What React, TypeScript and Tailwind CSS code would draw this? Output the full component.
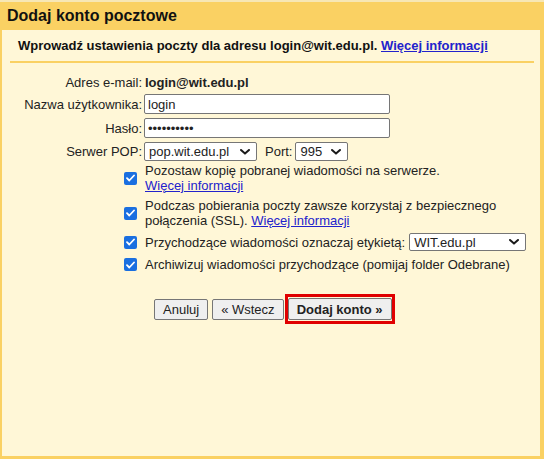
import type { ReactNode } from "react";

const Chevron = () => (
  <svg width="10" height="6" viewBox="0 0 10 6" className="shrink-0">
    <path d="M1 1l4 3.6L9 1" fill="none" stroke="#1a1a1a" strokeWidth="2" strokeLinecap="round" strokeLinejoin="round" />
  </svg>
);

const FakeSelect = ({ value, className }: { value: string; className: string }) => (
  <div
    className={`flex items-center justify-between bg-white border border-[#767676] rounded-[2px] pl-[4px] pr-[6px] ${className}`}
  >
    <span>{value}</span>
    <Chevron />
  </div>
);

const Check = () => (
  <span className="w-[13px] h-[13px] rounded-[2px] bg-[#1a6fe0] flex items-center justify-center shrink-0">
    <svg width="9" height="8" viewBox="0 0 9 8">
      <path d="M1 4.2l2.3 2.3L8 1.5" fill="none" stroke="#fff" strokeWidth="1.8" strokeLinecap="round" strokeLinejoin="round" />
    </svg>
  </span>
);

const Link = ({ children }: { children: ReactNode }) => (
  <a href="#" className="text-[#2222cc] underline">
    {children}
  </a>
);

// Checkbox sits at the right end of the label column, text in the control column
const CheckRow = ({ className, children }: { className: string; children: ReactNode }) => (
  <div className={`grid grid-cols-[140px_1fr] gap-x-[2px] items-center ${className}`}>
    <div className="flex justify-end pr-[5px]">
      <Check />
    </div>
    <div className="pl-[1px]">{children}</div>
  </div>
);

export default function App() {
  return (
    <div className="w-[544px] h-[459px] flex flex-col bg-[#fad163] text-[#222] text-[13px] leading-[15px] font-['Liberation_Sans',Arial,sans-serif]">
      {/* Header */}
      <div className="h-[30px] border-t-2 border-[#f7e7b5] pl-[7px] pt-[5px]">
        <h1 className="text-[16px] leading-[18px] font-bold text-[#111]">Dodaj konto pocztowe</h1>
      </div>

      {/* Panel */}
      <div className="flex-1 ml-[2px] mr-[4px] mb-[3px] bg-[#fff7d7] flex flex-col">
        <p className="pt-[8px] pl-[16px] font-bold text-[#111]">
          Wprowadź ustawienia poczty dla adresu login@wit.edu.pl. <Link>Więcej informacji</Link>
        </p>
        <div className="mt-[8px] ml-[8px] mr-[6px] h-[2px] bg-[#fad163]" />

        <div className="grid grid-cols-[140px_1fr] gap-x-[2px] items-center mt-[9px] h-[21px]">
          <span className="text-right">Adres e-mail:</span>
          <span className="font-bold pl-[1px]">login@wit.edu.pl</span>
        </div>

        <div className="grid grid-cols-[140px_1fr] gap-x-[2px] items-center mt-[1px] h-[20px]">
          <label className="text-right">Nazwa użytkownika:</label>
          <input
            readOnly
            value="login"
            className="w-[246px] h-[20px] bg-white border border-[#767676] rounded-[2px] px-[3px] outline-none"
          />
        </div>

        <div className="grid grid-cols-[140px_1fr] gap-x-[2px] items-center mt-[4px] h-[20px]">
          <label className="text-right">Hasło:</label>
          <input
            readOnly
            value="••••••••••"
            className="w-[246px] h-[20px] bg-white border border-[#767676] rounded-[2px] px-[3px] outline-none"
          />
        </div>

        <div className="grid grid-cols-[140px_1fr] gap-x-[2px] items-center mt-[4px] h-[19px]">
          <span className="text-right">Serwer POP:</span>
          <div className="flex items-center">
            <FakeSelect value="pop.wit.edu.pl" className="w-[113px] h-[19px]" />
            <span className="ml-[8px] mr-[3px]">Port:</span>
            <FakeSelect value="995" className="w-[53px] h-[19px]" />
          </div>
        </div>

        <CheckRow className="mt-[2px]">
          Pozostaw kopię pobranej wiadomości na serwerze.
          <br />
          <Link>Więcej informacji</Link>
        </CheckRow>

        <CheckRow className="mt-[5px]">
          Podczas pobierania poczty zawsze korzystaj z bezpiecznego
          <br />
          połączenia (SSL). <Link>Więcej informacji</Link>
        </CheckRow>

        <CheckRow className="mt-[5px]">
          <div className="flex items-center">
            <span>Przychodzące wiadomości oznaczaj etykietą:</span>
            <FakeSelect value="WIT.edu.pl" className="ml-[4px] w-[117px] h-[18px]" />
          </div>
        </CheckRow>

        <CheckRow className="mt-[6px]">Archiwizuj wiadomości przychodzące (pomijaj folder Odebrane)</CheckRow>

        {/* Actions */}
        <div className="flex items-center mt-[22px] pl-[152px] gap-[4px]">
          <button className="h-[21px] px-[8px] bg-[#efefef] border border-[#767676] rounded-[2px]">Anuluj</button>
          <button className="h-[21px] px-[8px] bg-[#efefef] border border-[#767676] rounded-[2px]">« Wstecz</button>
          <span className="-ml-[3px] border-[3px] border-[#e00000] py-[1px]">
            <button className="h-[22px] w-[104px] bg-[#efefef] border border-[#767676] rounded-[2px] font-bold">
              Dodaj konto »
            </button>
          </span>
        </div>
      </div>
    </div>
  );
}
